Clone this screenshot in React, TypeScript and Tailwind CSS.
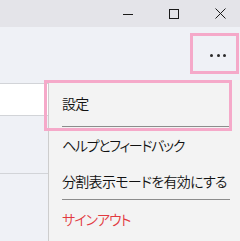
import React from "react";

export default function App() {
  return (
    <div className="relative w-[240px] h-[241px] overflow-hidden bg-[#eff1f6] font-['Noto_Sans_CJK_JP','Noto_Sans',sans-serif] [font-feature-settings:'palt']">
      {/* title bar */}
      <div className="h-[27px] bg-[#e4e4e9] flex justify-end mr-[-3px]">
        <div className="w-[46px] flex items-center justify-center">
          <svg width="10" height="10" viewBox="0 0 10 10">
            <path d="M0 5.5H10" stroke="#1a1a1a" strokeWidth="1" />
          </svg>
        </div>
        <div className="w-[46px] flex items-center justify-center">
          <svg width="10" height="10" viewBox="0 0 10 10">
            <rect x="0.5" y="0.5" width="9" height="9" fill="none" stroke="#1a1a1a" strokeWidth="1" />
          </svg>
        </div>
        <div className="w-[46px] flex items-center justify-center">
          <svg width="11" height="11" viewBox="0 0 11 11">
            <path d="M0.5 0.5L10.5 10.5M10.5 0.5L0.5 10.5" stroke="#1a1a1a" strokeWidth="1" />
          </svg>
        </div>
      </div>
      {/* toolbar */}
      <div className="h-[56px] flex justify-end items-center pr-[14px]">
        <div className="flex gap-[3.5px] items-center">
          <span className="w-[3px] h-[3px] rounded-full bg-[#2a2a2a]" />
          <span className="w-[3px] h-[3px] rounded-full bg-[#2a2a2a]" />
          <span className="w-[3px] h-[3px] rounded-full bg-[#2a2a2a]" />
        </div>
      </div>
      {/* input */}
      <div className="h-[33px] bg-white border-y border-[#d2d4d8]" />
      <div className="h-[58px] border-b border-[#d2d4d8]" />

      {/* menu */}
      <div className="absolute left-[48px] top-[80px] right-0 bottom-0 bg-[#f3f3f3] border-l border-[#cdcdcd] flex flex-col text-[14px] leading-none font-[350] tracking-[-0.7px] text-[#111]">
        <div className="h-[46px] flex items-center pl-[13px]">設定</div>
        <div className="h-px bg-[#8c8c8c] ml-[13px] mr-[10px]" />
        <div className="h-[36px] flex items-center pl-[13px] tracking-[-1.3px]">ヘルプとフィードバック</div>
        <div className="h-[36px] flex items-center pl-[13px]">分割表示モードを有効にする</div>
        <div className="h-px bg-[#8c8c8c] ml-[13px] mr-[10px]" />
        <div className="h-[38px] flex items-center pl-[13px] tracking-[-1px] text-[#e23a3f]">サインアウト</div>
      </div>

      {/* highlight annotations */}
      <div className="absolute left-[190px] top-[33px] w-[49px] h-[41px] border-[3px] border-[#f5a9c9]" />
      <div className="absolute left-[44px] top-[80px] w-[188px] h-[51px] border-[3px] border-[#f5a9c9]" />
    </div>
  );
}
